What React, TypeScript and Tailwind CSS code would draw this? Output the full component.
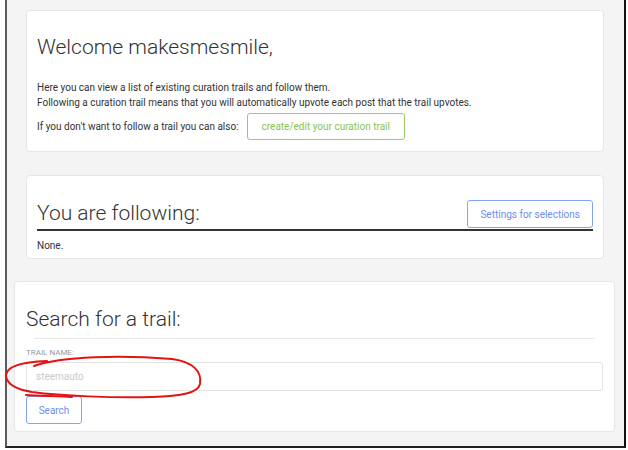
export default function App() {
  return (
    <div className="w-[628px] h-[450px] bg-white" style={{ fontFamily: "Roboto, 'Liberation Sans', sans-serif" }}>
      <div className="relative ml-[5px] w-[621px] h-[448px] border-l-2 border-r-2 border-b-2 border-l-[#5a5a5a] border-r-[#111] border-b-[#222] bg-[#f4f4f4] pt-[10px]">
        {/* Welcome card */}
        <div className="ml-[19px] w-[578px] bg-white border border-[#e6e6e6] rounded-[4px] pl-[10px] pr-4 pt-[22px] pb-[11px] text-[#333]">
          <h1 className="text-[21px] leading-[28px] font-light text-[#333]">Welcome makesmesmile,</h1>
          <p className="mt-[19px] text-[10px] leading-[15px]">
            Here you can view a list of existing curation trails and follow them.
            <br />
            Following a curation trail means that you will automatically upvote each post that the trail upvotes.
          </p>
          <div className="mt-[3px] flex items-center gap-[8px] text-[10px]">
            <span>If you don't want to follow a trail you can also:</span>
            <button className="h-[27px] px-[14px] border border-[#9ccc65] rounded-[3px] text-[#8bc34a] text-[10px] bg-white">
              create/edit your curation trail
            </button>
          </div>
        </div>

        {/* Following card */}
        <div className="mt-[23px] ml-[19px] w-[578px] bg-white border border-[#e6e6e6] rounded-[4px] pl-[10px] pr-[10px] pt-[24px] pb-[5px] text-[#333]">
          <div className="flex items-end justify-between border-b-2 border-[#333]">
            <h2 className="text-[21px] leading-[24px] pb-[4px] font-light">You are following:</h2>
            <button className="h-[28px] px-[12px] mb-[1px] border border-[#82a4f8] rounded-[3px] text-[#6b8ef2] text-[10px] bg-white">
              Settings for selections
            </button>
          </div>
          <div className="mt-[7px] text-[10px] leading-[15px]">None.</div>
        </div>

        {/* Search card */}
        <div className="mt-[22px] ml-[7px] w-[601px] bg-white border border-[#e6e6e6] rounded-[4px] px-[11px] pt-[23px] pb-[7px] text-[#333]">
          <h2 className="text-[21px] leading-[28px] font-light">Search for a trail:</h2>
          <div className="mt-[5px] mx-[8px] h-px bg-[#e9e9e9]" />
          <div className="mt-[9px] text-[8px] leading-[10px] uppercase text-[#9a9a9a]">Trail name:</div>
          <input
            className="mt-[4px] w-full h-[29px] border border-[#e3e3e3] rounded-[3px] px-[9px] text-[10px] outline-none placeholder:text-[#c9c9c9]"
            placeholder="steemauto"
          />
          <button className="mt-[5px] h-[28px] w-[56px] border border-[#82a4f8] rounded-[3px] text-[#6b8ef2] text-[10px] bg-white">
            Search
          </button>
        </div>

        {/* hand-drawn annotation */}
        <svg className="absolute left-[-5px] top-0 pointer-events-none" width="628" height="450" viewBox="0 0 628 450" fill="none">
          <path
            d="M32 366 C60 356 120 355 170 359 C192 362 200 372 198 384 C196 393 180 396 150 397 C110 398 60 396 30 392 C12 389 4 383 4 375 C5 366 20 362 45 361"
            stroke="#e31313"
            strokeWidth="2"
            strokeLinecap="round"
          />
          <path d="M24 395 C40 396 58 396 70 397" stroke="#e31313" strokeWidth="2" strokeLinecap="round" />
        </svg>
      </div>
    </div>
  );
}
